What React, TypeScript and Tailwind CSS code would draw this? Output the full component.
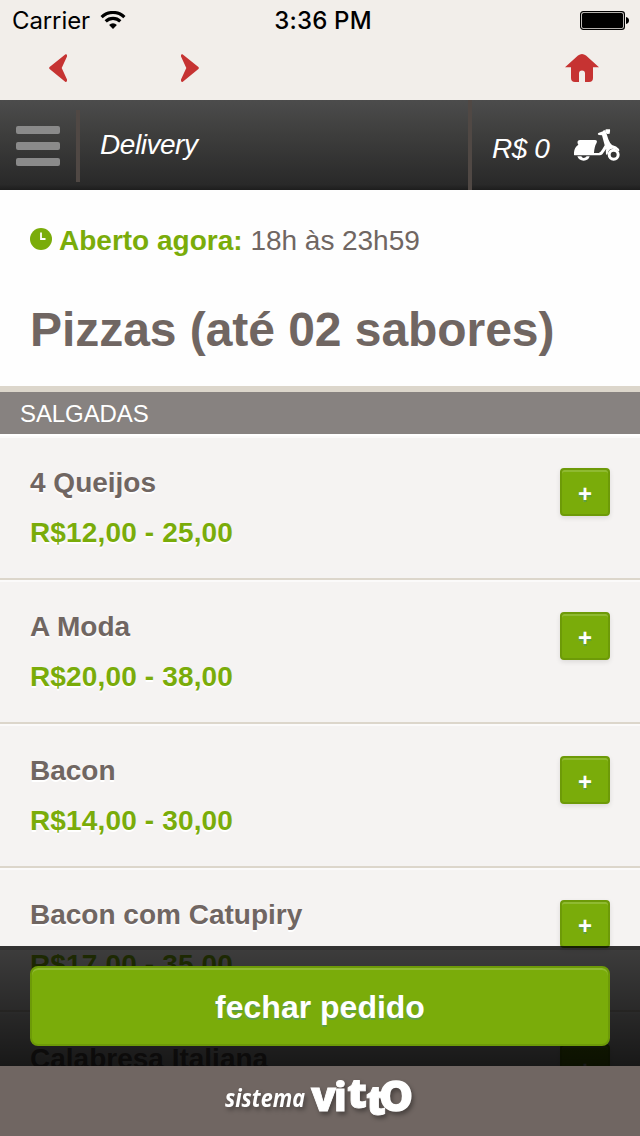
import React from "react";

type Item = { name: string; price: string };

const items: Item[] = [
  { name: "4 Queijos", price: "R$12,00 - 25,00" },
  { name: "A Moda", price: "R$20,00 - 38,00" },
  { name: "Bacon", price: "R$14,00 - 30,00" },
  { name: "Bacon com Catupiry", price: "R$17,00 - 35,00" },
  { name: "Calabresa Italiana", price: "R$17,00 - 35,00" },
];

function StatusBar() {
  return (
    <div className="flex h-10 shrink-0 items-center justify-between pl-3 pr-[11px] font-['Inter',sans-serif] text-[24px] leading-10 text-black">
      <div className="flex w-[240px] items-center">
        <span className="w-[78px] pt-[2px] tracking-[-0.1px]">Carrier</span>
        <svg className="ml-[10px]" width="26" height="18" viewBox="0 0 26 18">
          <g fill="none" stroke="#000" strokeWidth="3.1">
            <path d="M1.6 6.1A16.2 16.2 0 0 1 24.4 6.1" />
            <path d="M5.7 10.4A10.4 10.4 0 0 1 20.3 10.4" />
          </g>
          <path d="M13 17.9L9.1 13.9A5.6 5.6 0 0 1 16.9 13.9Z" />
        </svg>
      </div>
      <span className="pl-[5px] pt-[2px] font-medium tracking-[0.2px]">3:36 PM</span>
      <div className="flex w-[240px] justify-end">
        <svg width="49" height="19" viewBox="0 0 49 19">
          <rect x="0.6" y="0.6" width="43.8" height="17.8" rx="2.6" fill="none" stroke="#000" strokeWidth="1.2" />
          <rect x="2" y="2" width="41" height="15" rx="1.5" />
          <path d="M46 6Q49 6.8 49 9.5T46 13Z" />
        </svg>
      </div>
    </div>
  );
}

function BrowserNav() {
  return (
    <div className="flex h-[60px] shrink-0 items-start px-[41px] pt-[14px]">
      <svg className="ml-2" width="18" height="28" viewBox="0 0 18 28" fill="#c63332">
        <path d="M16.5 .2Q18.6 0 18 2.6L12.7 14L18 25.5Q18.3 28 16.5 27.9L.6 15Q-.3 14 .6 13Z" />
      </svg>
      <svg className="ml-[114px]" width="18" height="28" viewBox="0 0 18 28" fill="#c63332">
        <path d="M1.5 .2Q-.6 0 0 2.6L5.3 14L0 25.5Q-.3 28 1.5 27.9L17.4 15Q18.3 14 17.4 13Z" />
      </svg>
      <svg className="ml-auto" width="34" height="28" viewBox="0 0 34 28" fill="#c63332">
        <path d="M0 13.2L13 1.5Q17 -1.5 21 1.5L34 13.2H28V24Q28 28 24 28H20V19.5Q20 16.6 17 16.6T14 19.5V28H10Q6 28 6 24V13.2Z" />
      </svg>
    </div>
  );
}

function Scooter() {
  return (
    <svg width="48" height="34" viewBox="0 0 144 102" fill="#fff">
      <path d="M14 40Q16 36 22 36H66Q74 37 71 44Q64 55 63 75H77Q83 73 88 64L95 52L87 22L77 21Q72 18 76 15L90 10L92 7H97L100 15L106 34Q110 45 117 51Q131 54 138 63Q141 68 137 70Q126 60 114 63Q105 67 104 79L99 80Q97 68 100 62L88 79Q85 82 80 82H5Q2 82 3 73Q4 58 16 50Q12 45 14 40Z" />
      <path d="M97 7Q97 3 102 4L111 4Q112 10 110 17L103 18Q97 15 97 7Z" />
      <path d="M13 85H25Q27 90 32 90T41 85H50Q46 98 32 98T13 85Z" />
      <circle cx="122" cy="80" r="13.5" fill="none" stroke="#fff" strokeWidth="9" />
    </svg>
  );
}

function Header() {
  return (
    <header className="flex h-[90px] shrink-0 bg-[linear-gradient(#4c4c4c,#3f3f3e_35%,#292929_94%,#1d1d1d)] font-['Liberation_Sans',Arial,sans-serif] text-[28px] italic leading-[30px] text-white">
      <div className="flex w-[76px] flex-col gap-2 pl-4 pt-[26px]">
        <i className="h-2 w-11 rounded-[2px] bg-[#8a8a8a]" />
        <i className="h-2 w-11 rounded-[2px] bg-[#8a8a8a]" />
        <i className="h-2 w-11 rounded-[2px] bg-[#8a8a8a]" />
      </div>
      <div className="mt-[10px] h-[72px] w-1 bg-[#504844]" />
      <div className="grow pl-5 pt-[30px] tracking-[-0.45px]">Delivery</div>
      <div className="h-[90px] w-1 bg-[#504844]" />
      <div className="flex w-[168px] pl-5">
        <span className="mt-[34px] w-[81px] tracking-[-0.4px]">R$ 0</span>
        <div className="pt-[28px]">
          <Scooter />
        </div>
      </div>
    </header>
  );
}

function Row({ item }: { item: Item }) {
  return (
    <li className="flex h-36 justify-between border-b-2 border-[#dcd6cb] bg-[#f5f3f2] px-[30px] pt-8 shadow-[inset_0_2px_0_#fbfafa]">
      <div className="text-[28px] font-bold leading-[30px] [text-shadow:0_2px_0_#fff]">
        <div className="text-[#706662]">{item.name}</div>
        <div className="mt-5 tracking-[0.15px] text-[#7aac0a]">{item.price}</div>
      </div>
      <button className="h-12 w-[50px] rounded-[4px] border-2 border-[#6d9a08] bg-[#7aac0a] pt-px text-center text-[24px] font-bold leading-[46px] text-white shadow-[inset_0_2px_0_#8fba31,0_2px_5px_rgba(0,0,0,0.1)] [text-shadow:0_2px_0_#5e9f48]">
        +
      </button>
    </li>
  );
}

function Logo() {
  return (
    <svg width="220" height="70" viewBox="210 1066 220 70" fill="#fff" className="drop-shadow-[2px_3px_2px_rgba(0,0,0,0.35)]">
      <g fontFamily="Open Sans, sans-serif">
        <text x="225" y="1107" fontSize="25" fontWeight="700" fontStyle="italic" textLength="80" lengthAdjust="spacingAndGlyphs">sistema</text>
        <g fontWeight="800" stroke="#fff" strokeWidth="0.8">
          <text x="311" y="1111" fontSize="40" textLength="25" lengthAdjust="spacingAndGlyphs">v</text>
          <text x="334" y="1111" fontSize="39">i</text>
          <text x="347" y="1108" fontSize="40" textLength="20" lengthAdjust="spacingAndGlyphs">t</text>
          <text x="366" y="1115" fontSize="40" textLength="20" lengthAdjust="spacingAndGlyphs">t</text>
        </g>
        <text x="379.5" y="1111" fontSize="57" fontFamily="Lato, sans-serif" fontWeight="900" stroke="#fff" strokeWidth="1.5" textLength="33" lengthAdjust="spacingAndGlyphs">o</text>
      </g>
    </svg>
  );
}

export default function App() {
  return (
    <div className="relative flex h-[1136px] w-[640px] flex-col overflow-hidden bg-[#f2eeea] font-['Liberation_Sans',Arial,sans-serif]">
      <StatusBar />
      <BrowserNav />
      <Header />
      <main className="min-h-0 flex-1 overflow-hidden bg-[#fefefe]">
        <div className="flex h-[75px] items-start px-[30px] pt-9 text-[28px] leading-[30px] text-[#706662]">
          <svg className="mt-[2px] mr-[7px]" width="22" height="22" viewBox="0 0 22 22">
            <circle cx="11" cy="11" r="11" fill="#7aac0a" />
            <path d="M11 4.5V11H15.5" fill="none" stroke="#fff" strokeWidth="1.8" />
          </svg>
          <b className="mr-2 text-[#7aac0a]">Aberto agora:</b>
          <span className="tracking-[-0.05px]">18h às 23h59</span>
        </div>
        <h1 className="h-[121px] pl-[30px] pt-[37px] text-[48px] font-bold leading-[56px] tracking-[-0.05px] text-[#706662]">Pizzas (até 02 sabores)</h1>
        <h2 className="h-12 border-t-[6px] border-[#dcd6cb] bg-[#878280] pl-5 pt-px text-[24px] leading-[42px] tracking-[-0.1px] text-white">SALGADAS</h2>
        <ul className="border-t-2 border-white">
          {items.map((item) => (
            <Row key={item.name} item={item} />
          ))}
        </ul>
      </main>
      <div className="absolute inset-x-0 top-[946px] h-[120px] bg-[linear-gradient(rgba(0,0,0,0.75),rgba(0,0,0,0.9))] px-[30px] pt-5 shadow-[inset_0_4px_0_rgba(0,0,0,0.17)]">
        <button className="h-20 w-full rounded-[8px] border-2 border-[#6d9a08] bg-[#7aac0a] text-[32px] font-bold leading-[78px] text-white shadow-[inset_0_2px_0_#8fba31] [text-shadow:0_2px_0_#5e9f48]">
          fechar pedido
        </button>
      </div>
      <footer className="flex h-[70px] shrink-0 justify-center bg-[#706662]">
        <Logo />
      </footer>
    </div>
  );
}
